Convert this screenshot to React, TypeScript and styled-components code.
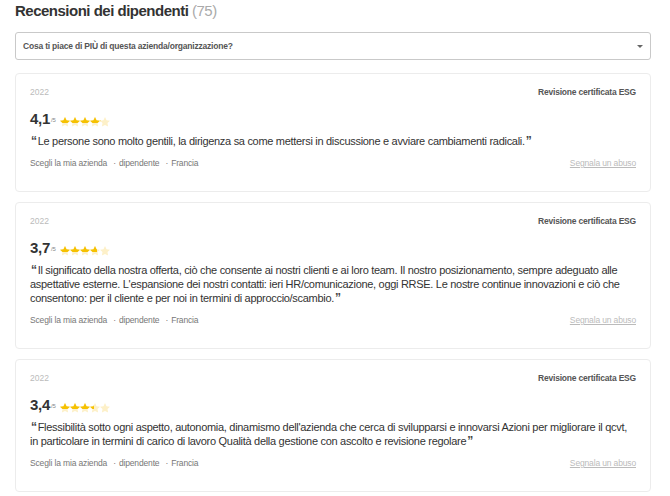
import React from "react";
import styled, { createGlobalStyle } from "styled-components";

const GlobalStyle = createGlobalStyle`
  body {
    margin: 0;
    background: #fff;
    font-family: "Liberation Sans", Arial, Helvetica, sans-serif;
    color: #333;
  }
`;

const Page = styled.div`
  padding: 0 19px 0 15px;
  display: flex;
  flex-direction: column;
`;

const Title = styled.h2`
  margin: 0;
  font-size: 15px;
  letter-spacing: -0.5px;
  line-height: 22px;
  font-weight: bold;
  color: #333;
`;

const Count = styled.span`
  color: #aaa;
  font-weight: normal;
`;

const Select = styled.div`
  margin-top: 10px;
  height: 26px;
  border: 1px solid #c9c9c9;
  border-radius: 3px;
  display: flex;
  align-items: center;
  justify-content: space-between;
  padding: 0 7px;
  font-size: 8.5px;
  letter-spacing: -0.2px;
  font-weight: bold;
  color: #555;
`;

const Caret = styled.span`
  width: 0;
  height: 0;
  border-left: 3px solid transparent;
  border-right: 3px solid transparent;
  border-top: 3px solid #666;
`;

const List = styled.div`
  margin-top: 13px;
  display: flex;
  flex-direction: column;
  gap: 10px;
`;

const Card = styled.div`
  border: 1px solid #ececec;
  border-radius: 4px;
  padding: 12px 14px 22px;
  display: flex;
  flex-direction: column;
`;

const Row = styled.div`
  display: flex;
  justify-content: space-between;
  align-items: center;
  line-height: 12px;
`;

const Year = styled.span`
  font-size: 8.5px;
  color: #bbb;
`;

const Badge = styled.span`
  font-size: 8.5px;
  letter-spacing: -0.2px;
  font-weight: bold;
  color: #555;
`;

const RatingRow = styled.div`
  margin-top: 10px;
  height: 20px;
  display: flex;
  align-items: center;
`;

const Score = styled.span`
  font-size: 15px;
  letter-spacing: -0.3px;
  font-weight: bold;
  color: #333;
`;

const OutOf = styled.span`
  font-size: 6px;
  color: #888;
  margin: 4px 4px 0 1px;
`;

const Stars = styled.span`
  display: flex;
`;

const StarBox = styled.span`
  position: relative;
  width: 10px;
  height: 10px;
  display: inline-block;
`;

const StarFill = styled.span`
  position: absolute;
  left: 0;
  top: 0;
  height: 10px;
  overflow: hidden;
`;

const Text = styled.p`
  margin: 6px 0 0;
  font-size: 11px;
  letter-spacing: -0.3px;
  line-height: 14px;
  color: #333;
`;

const Quote = styled.span`
  font-weight: bold;
  font-size: 12px;
  line-height: 14px;
  color: #444;
  margin: 0 1px;
`;

const Footer = styled.div`
  margin-top: 9px;
  display: flex;
  justify-content: space-between;
  line-height: 12px;
  font-size: 8.5px;
  letter-spacing: -0.15px;
  color: #777;
`;

const Meta = styled.span`
  & + &::before {
    content: "·";
    margin: 0 3px 0 6px;
  }
`;

const Report = styled.a`
  color: #bbb;
  text-decoration: underline;
`;

const starPath =
  "M12 2l3.09 6.26L22 9.27l-5 4.87 1.18 6.88L12 17.77l-6.18 3.25L7 14.14 2 9.27l6.91-1.01L12 2z";

function Star({ fill }: { fill: number }) {
  return (
    <StarBox>
      <svg width="10" height="10" viewBox="2 2 20 20">
        <path d={starPath} fill="#fdf0c8" />
      </svg>
      <StarFill style={{ width: `${fill * 100}%` }}>
        <svg width="10" height="10" viewBox="2 2 20 20">
          <path d={starPath} fill="#f6c100" />
        </svg>
      </StarFill>
    </StarBox>
  );
}

function Rating({ value }: { value: number }) {
  return (
    <RatingRow>
      <Score>{value.toFixed(1).replace(".", ",")}</Score>
      <OutOf>/5</OutOf>
      <Stars>
        {[0, 1, 2, 3, 4].map((i) => (
          <Star key={i} fill={Math.max(0, Math.min(1, value - i))} />
        ))}
      </Stars>
    </RatingRow>
  );
}

const reviews = [
  {
    rating: 4.1,
    text: "Le persone sono molto gentili, la dirigenza sa come mettersi in discussione e avviare cambiamenti radicali.",
  },
  {
    rating: 3.7,
    text: "Il significato della nostra offerta, ciò che consente ai nostri clienti e ai loro team. Il nostro posizionamento, sempre adeguato alle aspettative esterne. L'espansione dei nostri contatti: ieri HR/comunicazione, oggi RRSE. Le nostre continue innovazioni e ciò che consentono: per il cliente e per noi in termini di approccio/scambio.",
  },
  {
    rating: 3.4,
    text: "Flessibilità sotto ogni aspetto, autonomia, dinamismo dell'azienda che cerca di svilupparsi e innovarsi Azioni per migliorare il qcvt, in particolare in termini di carico di lavoro Qualità della gestione con ascolto e revisione regolare",
  },
];

export default function App() {
  return (
    <>
      <GlobalStyle />
      <Page>
        <Title>
          Recensioni dei dipendenti <Count>(75)</Count>
        </Title>
        <Select>
          Cosa ti piace di PIÙ di questa azienda/organizzazione?
          <Caret />
        </Select>
        <List>
          {reviews.map((r, i) => (
            <Card key={i}>
              <Row>
                <Year>2022</Year>
                <Badge>Revisione certificata ESG</Badge>
              </Row>
              <Rating value={r.rating} />
              <Text>
                <Quote>“</Quote>
                {r.text}
                <Quote>”</Quote>
              </Text>
              <Footer>
                <span>
                  <Meta>Scegli la mia azienda</Meta>
                  <Meta>dipendente</Meta>
                  <Meta>Francia</Meta>
                </span>
                <Report>Segnala un abuso</Report>
              </Footer>
            </Card>
          ))}
        </List>
      </Page>
    </>
  );
}
